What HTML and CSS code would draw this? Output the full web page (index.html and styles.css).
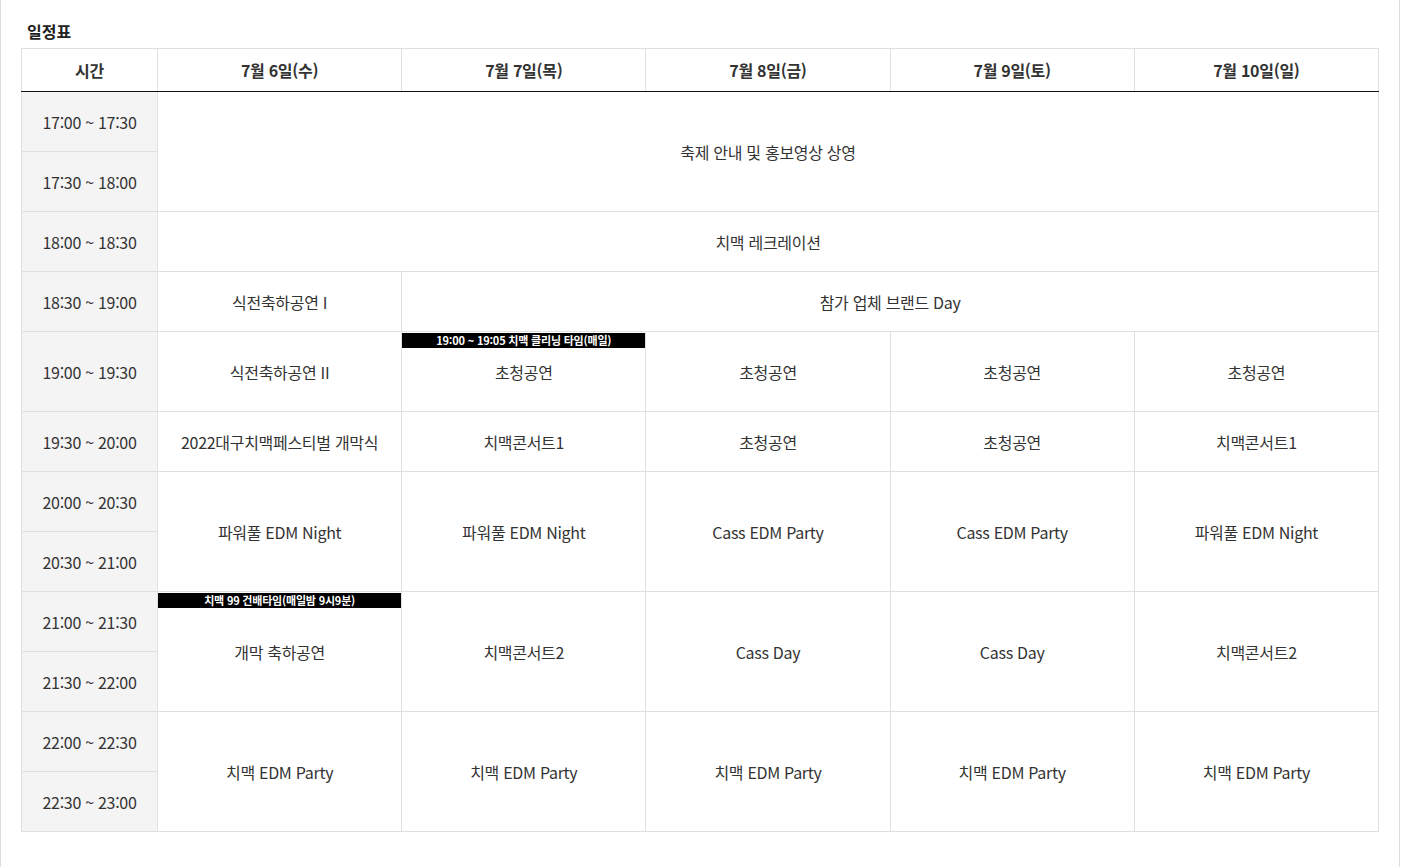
FILE: index.html
```html
<!DOCTYPE html>
<html lang="ko">
<head>
  <meta charset="UTF-8" />
  <meta name="viewport" content="width=device-width, initial-scale=1.0"/>
  <title>일정표 | 대구치맥페스티벌</title>
  <link rel="stylesheet" href="styles.css">
</head>
<body>
  <div class="panel">
    <h2 class="title">일정표</h2>

    <table class="schedule">
      <colgroup>
        <col class="col-time">
        <col><col><col><col><col>
      </colgroup>
      <thead>
        <tr>
          <th>시간</th>
          <th>7월 6일(수)</th>
          <th>7월 7일(목)</th>
          <th>7월 8일(금)</th>
          <th>7월 9일(토)</th>
          <th>7월 10일(일)</th>
        </tr>
      </thead>
      <tbody>
        <tr>
          <td class="time">17:00 ~ 17:30</td>
          <td colspan="5" rowspan="2">축제 안내 및 홍보영상 상영</td>
        </tr>
        <tr>
          <td class="time">17:30 ~ 18:00</td>
        </tr>
        <tr>
          <td class="time">18:00 ~ 18:30</td>
          <td colspan="5">치맥 레크레이션</td>
        </tr>
        <tr>
          <td class="time">18:30 ~ 19:00</td>
          <td>식전축하공연 I</td>
          <td colspan="4">참가 업체 브랜드 Day</td>
        </tr>
        <tr class="tall">
          <td class="time">19:00 ~ 19:30</td>
          <td>식전축하공연 II</td>
          <td class="has-notice"><span class="notice">19:00 ~ 19:05 치맥 클리닝 타임(매일)</span>초청공연</td>
          <td>초청공연</td>
          <td>초청공연</td>
          <td>초청공연</td>
        </tr>
        <tr>
          <td class="time">19:30 ~ 20:00</td>
          <td>2022대구치맥페스티벌 개막식</td>
          <td>치맥콘서트1</td>
          <td>초청공연</td>
          <td>초청공연</td>
          <td>치맥콘서트1</td>
        </tr>
        <tr>
          <td class="time">20:00 ~ 20:30</td>
          <td rowspan="2">파워풀 EDM Night</td>
          <td rowspan="2">파워풀 EDM Night</td>
          <td rowspan="2">Cass EDM Party</td>
          <td rowspan="2">Cass EDM Party</td>
          <td rowspan="2">파워풀 EDM Night</td>
        </tr>
        <tr>
          <td class="time">20:30 ~ 21:00</td>
        </tr>
        <tr>
          <td class="time">21:00 ~ 21:30</td>
          <td rowspan="2" class="has-notice"><span class="notice">치맥 99 건배타임(매일밤 9시9분)</span>개막 축하공연</td>
          <td rowspan="2">치맥콘서트2</td>
          <td rowspan="2">Cass Day</td>
          <td rowspan="2">Cass Day</td>
          <td rowspan="2">치맥콘서트2</td>
        </tr>
        <tr>
          <td class="time">21:30 ~ 22:00</td>
        </tr>
        <tr>
          <td class="time">22:00 ~ 22:30</td>
          <td rowspan="2">치맥 EDM Party</td>
          <td rowspan="2">치맥 EDM Party</td>
          <td rowspan="2">치맥 EDM Party</td>
          <td rowspan="2">치맥 EDM Party</td>
          <td rowspan="2">치맥 EDM Party</td>
        </tr>
        <tr>
          <td class="time">22:30 ~ 23:00</td>
        </tr>
      </tbody>
    </table>
  </div>
</body>
</html>
```

FILE: styles.css
```css
html, body {
  margin: 0;
  background-color: #fff;
}
body {
  font-family: "Noto Sans CJK KR", "Noto Sans", sans-serif;
  color: #333;
}
.panel {
  width: 1400px;
  min-height: 867px;
  box-sizing: border-box;
  border-left: 1px solid #ddd;
  border-right: 1px solid #ddd;
  padding: 20px 20px 0 20px;
}
.title {
  margin: 0 0 6px 6px;
  font-size: 16px;
  font-weight: bold;
  color: #222;
  line-height: 22px;
}
.schedule {
  width: 100%;
  border-collapse: collapse;
  table-layout: fixed;
  font-size: 16px;
  letter-spacing: -0.3px;
}
.col-time {
  width: 136px;
}
.schedule th,
.schedule td {
  border: 1px solid #e0e0e0;
  text-align: center;
  vertical-align: middle;
  padding: 0;
}
.schedule th {
  height: 42px;
  font-weight: bold;
  color: #333;
  border-bottom: 1px solid #111;
}
.schedule td {
  height: 59px;
}
.schedule tr.tall td {
  height: 79px;
}
.schedule td.time {
  background-color: #f4f4f4;
}
.has-notice {
  position: relative;
}
.notice {
  position: absolute;
  top: 1px;
  left: 0;
  right: 0;
  height: 15px;
  line-height: 15px;
  background-color: #000;
  color: #fff;
  font-size: 11px;
  font-weight: bold;
  letter-spacing: -0.2px;
}
```
